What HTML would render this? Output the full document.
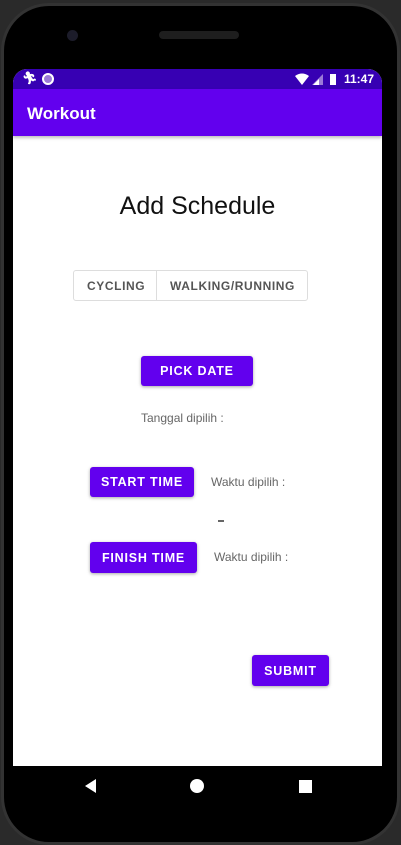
<!DOCTYPE html><html><head><style>
*{margin:0;padding:0;box-sizing:border-box}
body{width:401px;height:845px;background:#2a2a2a;position:relative;overflow:hidden;font-family:"Liberation Sans",sans-serif}
.a{position:absolute}
.btn{position:absolute;background:#6200ee;color:#fff;font-size:12.5px;font-weight:bold;letter-spacing:0.8px;display:flex;align-items:center;justify-content:center;border-radius:3px;box-shadow:0 1px 3px rgba(0,0,0,.35)}
.g{color:#666;font-size:12px}
</style></head><body>
<div class="a" style="left:1px;top:3px;width:399px;height:842px;border-radius:48px;background:#000;border:3px solid #333"></div>
<div class="a" style="left:67px;top:30px;width:11px;height:11px;border-radius:50%;background:#1c1c2a"></div>
<div class="a" style="left:159px;top:31px;width:80px;height:8px;border-radius:4px;background:#1e1e1e"></div>
<div class="a" style="left:13px;top:69px;width:369px;height:697px;background:#fff;border-radius:14px 14px 0 0;overflow:hidden">
 <div class="a" style="left:0;top:0;width:369px;height:20px;background:#3700b3;color:#fff;font-size:12px;font-weight:bold">
  <span class="a" style="left:9px;top:2px;font-size:12px">🏃︎</span>
  <div class="a" style="left:29px;top:4px;width:12px;height:12px;border-radius:50%;border:2px solid #fff;background:#9b7ad8"></div>
  <svg class="a" style="left:282px;top:4px" width="46" height="13"><path d="M0 3 Q7 -2 14 3 L7 12Z" fill="#fff"/><path d="M28 1 L28 12 L17 12Z" fill="#9b7ad8"/><path d="M24 6 L24 12 L18 12Z" fill="#fff"/><rect x="35" y="1" width="6" height="11" fill="#fff"/></svg>
  <span class="a" style="left:331px;top:3px">11:47</span>
 </div>
 <div class="a" style="left:0;top:20px;width:369px;height:47px;background:#6200ee;color:#fff;font-size:17px;font-weight:bold;padding:15px 0 0 14px;box-shadow:0 2px 3px rgba(0,0,0,.25)">Workout</div>
 <div class="a" style="left:0;top:123px;width:369px;text-align:center;font-size:25px;color:#111">Add Schedule</div>
 <div class="a" style="left:60px;top:201px;width:235px;height:31px;border:1px solid #ddd;border-radius:3px;font-size:12px;letter-spacing:0.6px;color:#555;font-weight:bold">
  <span class="a" style="left:13px;top:8px">CYCLING</span>
  <div class="a" style="left:82px;top:0;width:1px;height:29px;background:#ddd"></div>
  <span class="a" style="left:96px;top:8px">WALKING/RUNNING</span>
 </div>
 <div class="btn" style="left:128px;top:287px;width:112px;height:30px">PICK DATE</div>
 <div class="a g" style="left:128px;top:342px">Tanggal dipilih :</div>
 <div class="btn" style="left:77px;top:398px;width:104px;height:30px">START TIME</div>
 <div class="a g" style="left:198px;top:406px">Waktu dipilih :</div>
 <div class="a" style="left:205px;top:451px;width:6px;height:2px;background:#666"></div>
 <div class="btn" style="left:77px;top:473px;width:107px;height:31px">FINISH TIME</div>
 <div class="a g" style="left:201px;top:481px">Waktu dipilih :</div>
 <div class="btn" style="left:239px;top:586px;width:77px;height:31px">SUBMIT</div>
</div>
<div class="a" style="left:13px;top:766px;width:369px;height:40px;background:#000">
 <svg class="a" style="left:70px;top:12px" width="16" height="16"><path d="M2 8 L13 1 L13 15Z" fill="#fff"/></svg>
 <div class="a" style="left:177px;top:13px;width:14px;height:14px;border-radius:50%;background:#fff"></div>
 <div class="a" style="left:286px;top:14px;width:13px;height:13px;background:#fff"></div>
</div>
</body></html>
